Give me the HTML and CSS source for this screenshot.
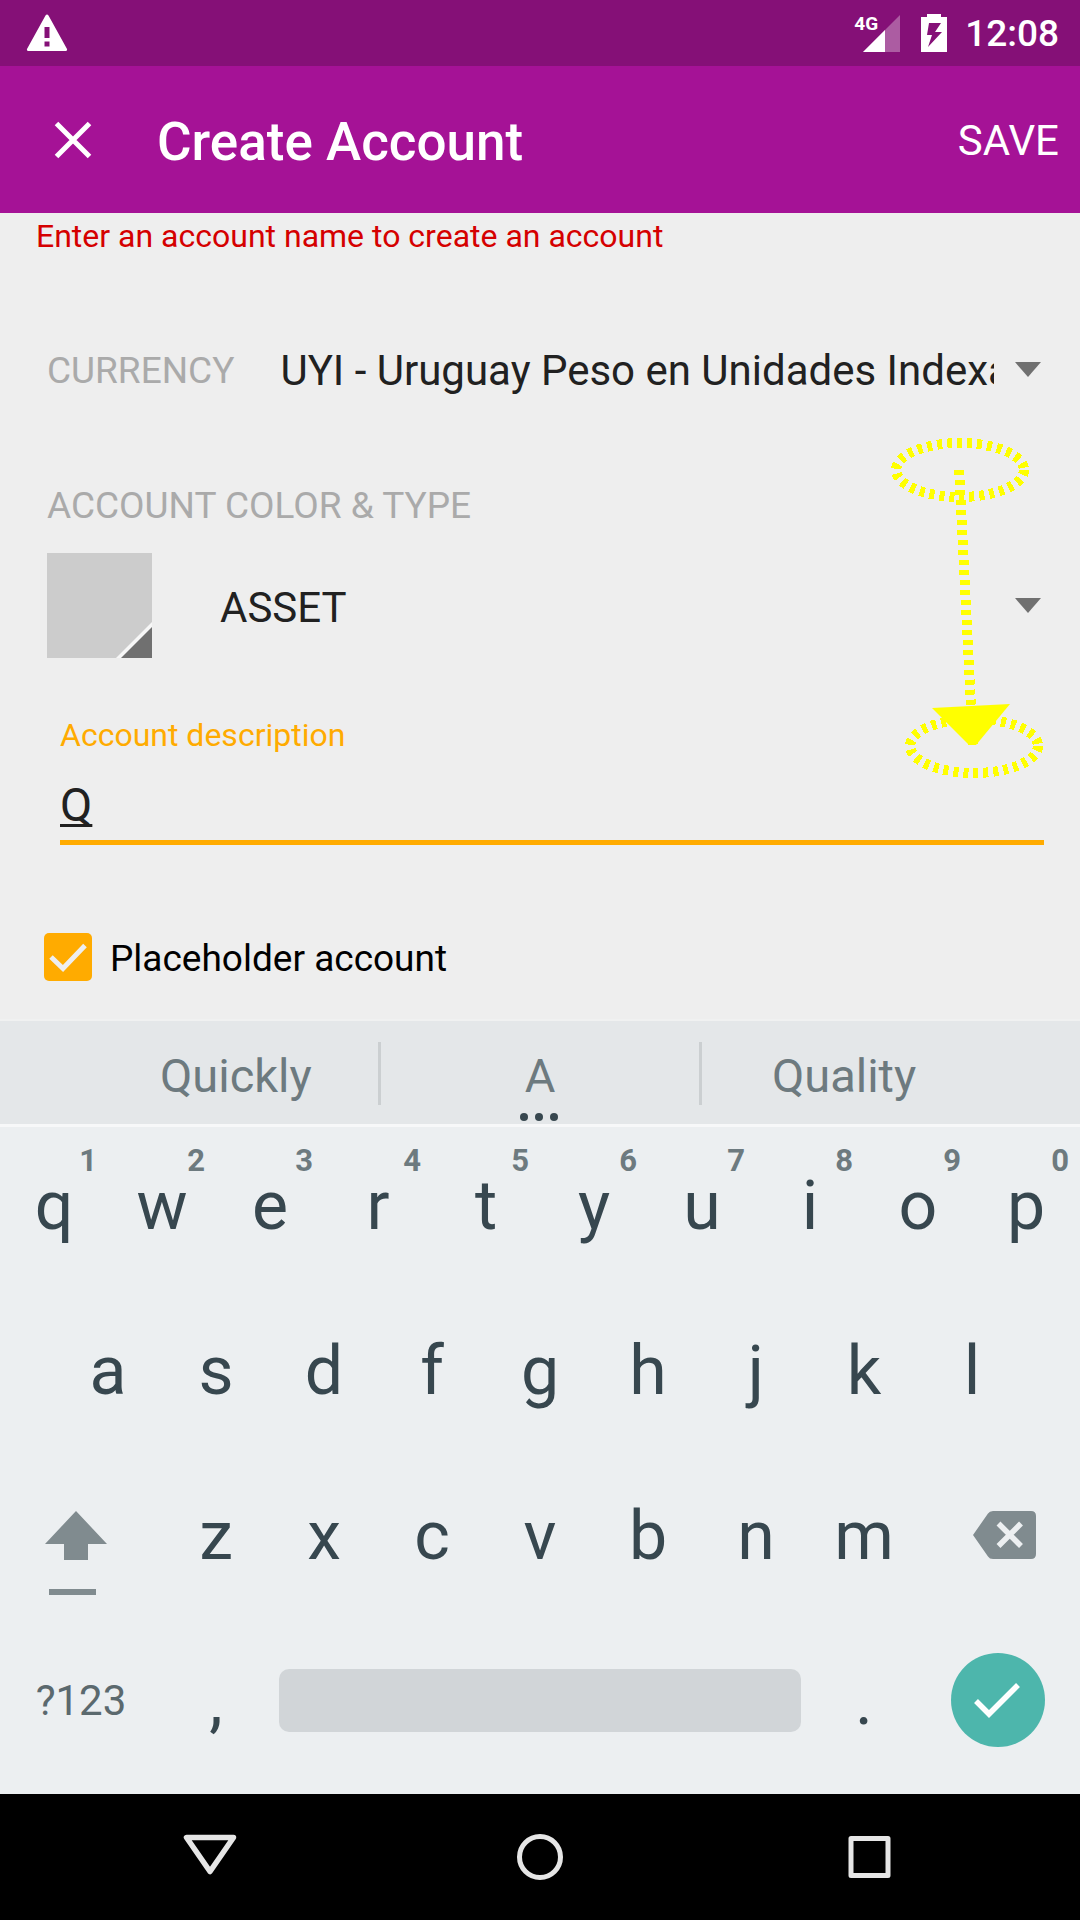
FILE: index.html
```html
<!DOCTYPE html>
<html lang="en">
<head>
<meta charset="utf-8">
<meta name="viewport" content="width=device-width, initial-scale=1">
<title>Create Account</title>
<link rel="stylesheet" href="styles.css">
</head>
<body>
<div class="status">
  <svg class="warn" width="42" height="38" viewBox="0 0 42 38" aria-hidden="true"><path fill="#fff" fill-rule="evenodd" d="M19.500 1.500Q21 -.5 22.500 1.500L41 35Q41.500 37 39.500 37H2.500Q.5 37 1 35ZM18.500 13v11h5V13ZM18.500 27.500v5h5v-5Z"/></svg>
  <span class="network">4G</span>
  <svg class="signal" width="37" height="37" viewBox="0 0 37 37" aria-hidden="true"><path fill="#fff" fill-opacity=".32" d="M37 0V37H0Z"/><path fill="#fff" d="M22 15V37H0Z"/></svg>
  <svg class="battery" width="26" height="38" viewBox="0 0 26 38" aria-hidden="true"><path fill="#fff" fill-rule="evenodd" d="M6 0h14v3h6v35H0V3h6ZM8 9 6 21h5L7 33 21 18h-7l6-9Z"/></svg>
  <span class="clock">12:08</span>
</div>
<header class="appbar">
  <button class="close" aria-label="Close"><svg width="38" height="38" viewBox="0 0 38 38"><path d="M2.500 2.500 35.500 35.500M35.500 2.500 2.500 35.500" stroke="#fff" stroke-width="5"/></svg></button>
  <h1 class="title">Create Account</h1>
  <button class="save">SAVE</button>
</header>
<main class="form">
  <p class="error">Enter an account name to create an account</p>
  <div class="row currency">
    <label class="caption" for="currency">CURRENCY</label>
    <select class="spinner" id="currency"><option>UYI - Uruguay Peso en Unidades Indexadas</option></select>
    <svg class="arrow" width="26" height="15" viewBox="0 0 26 15" aria-hidden="true"><path fill="#707070" d="M0 0H26L13 15Z"/></svg>
  </div>
  <label class="caption type-caption" for="type">ACCOUNT COLOR &amp; TYPE</label>
  <div class="row type">
    <button class="swatch" aria-label="Account color"><svg width="105" height="105" viewBox="0 0 105 105"><path fill="#ccc" d="M0 0H105V105H0Z"/><path fill="#f7f7f7" d="M105 69V105H69Z"/><path fill="#707070" d="M105 74V105H74Z"/></svg></button>
    <select class="spinner" id="type"><option>ASSET</option></select>
    <svg class="arrow" width="26" height="15" viewBox="0 0 26 15" aria-hidden="true"><path fill="#707070" d="M0 0H26L13 15Z"/></svg>
  </div>
  <div class="field">
    <label class="field-label" for="description">Account description</label>
    <input class="field-input" id="description" type="text" value="Q" autocomplete="off" spellcheck="false">
  </div>
  <label class="check">
    <input class="check-input" type="checkbox" checked>
    <span class="check-box"><svg width="48" height="48" viewBox="0 0 48 48" aria-hidden="true"><path d="M7 24 19 35.500 41 12.500" fill="none" stroke="#eee" stroke-width="5"/></svg></span>
    <span class="check-text">Placeholder account</span>
  </label>
  <svg class="gesture" width="156" height="344" viewBox="890 436 156 344" aria-hidden="true">
    <g fill="none" stroke="#ff0" stroke-width="10" stroke-dasharray="5 5" shape-rendering="crispEdges">
      <ellipse cx="960" cy="470" rx="64" ry="27"/>
      <ellipse cx="974" cy="746" rx="64" ry="27"/>
      <path d="M959 470 973 745"/>
    </g>
    <path fill="#ff0" d="M932 708 1010 704 976 745H969Z"/>
  </svg>
</main>
<section class="keyboard" aria-label="Keyboard">
  <div class="suggestions">
    <button class="suggestion">Quickly</button>
    <button class="suggestion middle">A<svg class="dots" width="40" height="8" viewBox="0 0 40 8" aria-hidden="true"><g fill="#37474f"><circle cx="5" cy="4" r="4"/><circle cx="20" cy="4" r="4"/><circle cx="35" cy="4" r="4"/></g></svg></button>
    <button class="suggestion">Quality</button>
  </div>
  <div class="keys">
    <div class="keyrow top">
      <button class="key">q<span class="hint">1</span></button><button class="key">w<span class="hint">2</span></button><button class="key">e<span class="hint">3</span></button><button class="key">r<span class="hint">4</span></button><button class="key">t<span class="hint">5</span></button><button class="key">y<span class="hint">6</span></button><button class="key">u<span class="hint">7</span></button><button class="key">i<span class="hint">8</span></button><button class="key">o<span class="hint">9</span></button><button class="key">p<span class="hint">0</span></button>
    </div>
    <div class="keyrow home">
      <button class="key">a</button><button class="key">s</button><button class="key">d</button><button class="key">f</button><button class="key">g</button><button class="key">h</button><button class="key">j</button><button class="key">k</button><button class="key">l</button>
    </div>
    <div class="keyrow lower">
      <button class="key shift" aria-label="Shift"><svg width="62" height="50" viewBox="0 0 62 50"><path fill="#808b8f" d="M31 0 62 33H43V49H19V33H0Z"/></svg><span class="shift-bar"></span></button>
      <button class="key">z</button><button class="key">x</button><button class="key">c</button><button class="key">v</button><button class="key">b</button><button class="key">n</button><button class="key">m</button>
      <button class="key delete" aria-label="Delete"><svg width="63" height="50" viewBox="0 0 63 50"><path fill="#808b8f" d="M0 24 15 2.500Q16.500 0 20 0H58Q63 0 63 5V43Q63 48 58 48H20Q16.500 48 15 45.500Z"/><path d="M25.500 12.500 48 35M48 12.500 25.500 35" stroke="#eceff1" stroke-width="5.500"/></svg></button>
    </div>
    <div class="keyrow bottom">
      <button class="key symbols">?123</button>
      <button class="key">,</button>
      <button class="key" aria-label="Space"><span class="space"></span></button>
      <button class="key">.</button>
      <button class="key" aria-label="Done"><svg width="96" height="96" viewBox="0 0 96 96"><circle cx="47" cy="47" r="47" fill="#4db6ac"/><path d="M25 48 38 61 67 32" fill="none" stroke="#fff" stroke-width="5.500"/></svg></button>
    </div>
  </div>
</section>
<nav class="navbar">
  <button class="nav" aria-label="Back"><svg width="56" height="48" viewBox="0 0 56 48"><path d="M3.500 4.500H50.500L27 38.500Z" fill="none" stroke="#e6e6e6" stroke-width="5.500" stroke-linejoin="round"/></svg></button>
  <button class="nav" aria-label="Home"><svg width="48" height="48" viewBox="0 0 48 48"><circle cx="24" cy="24" r="20.500" fill="none" stroke="#e6e6e6" stroke-width="5"/></svg></button>
  <button class="nav" aria-label="Overview"><svg width="48" height="48" viewBox="0 0 48 48"><rect x="6" y="5.500" width="37" height="37" fill="none" stroke="#e6e6e6" stroke-width="5" stroke-linejoin="round"/></svg></button>
</nav>
</body>
</html>
```
FILE: styles.css
```css
* { box-sizing: border-box; }

body {
  margin: 0;
  min-height: 100vh;
  display: flex;
  flex-direction: column;
  background: #eee;
  font-family: Roboto, "Noto Sans", sans-serif;
  color: #212121;
}

button, select, input {
  margin: 0;
  padding: 0;
  border: 0;
  background: none;
  color: inherit;
  font: inherit;
  outline: 0;
  appearance: none;
}

svg { display: block; flex: none; }

/* status bar */
.status {
  display: flex;
  align-items: center;
  height: 66px;
  padding: 0 21px 0 26px;
  background: #851077;
  color: #fff;
}
.warn { margin-right: auto; }
.network {
  align-self: flex-start;
  margin: 12px -15px 0 0;
  font-size: 19px;
  line-height: 24px;
  font-weight: 700;
}
.battery { margin: 0 18px 0 21px; }
.clock { padding-top: 2px; font-size: 37px; line-height: 44px; font-weight: 500; }

/* app bar */
.appbar {
  display: flex;
  align-items: center;
  height: 147px;
  padding: 0 21px 0 54px;
  background: #a51296;
  color: #fff;
}
.title {
  flex: 1;
  margin: 0 0 0 65px;
  padding-top: 4px;
  font-size: 53px;
  line-height: 60px;
  font-weight: 500;
}
.save { font-size: 42px; line-height: 48px; padding-top: 2px; }

/* form */
.form { position: relative; flex: 1; }
.error {
  margin: 0 0 68px;
  padding-left: 36px;
  font-size: 32px;
  line-height: 46px;
  color: #d50000;
}
.row { display: flex; align-items: center; padding: 0 39px 0 47px; }
.currency { height: 84px; }
.caption { font-size: 37px; line-height: 44px; color: #aaa; }
.currency .caption { padding-top: 3px; }
.spinner {
  flex: 1;
  min-width: 0;
  margin-right: 21px;
  padding-top: 4px;
  font-size: 42px;
  line-height: 52px;
  text-overflow: clip;
  overflow: hidden;
}
.currency .spinner { margin-left: 46px; }
.type-caption { display: block; margin: 73px 0 25px; padding-left: 47px; }
.type .spinner { margin-left: 68px; }
.field {
  display: flex;
  flex-direction: column;
  margin: 57px 36px 0 60px;
}
.field-label { font-size: 32px; line-height: 40px; color: #ffab00; }
.field-input {
  width: 100%;
  height: 90px;
  padding-top: 14px;
  border-bottom: 5px solid #ffab00;
  font-size: 47px;
  text-decoration: underline 3px;
  text-decoration-skip-ink: none;
  text-underline-offset: 3px;
}
.check {
  display: flex;
  align-items: center;
  margin: 88px 44px 38px;
  font-size: 37px;
  line-height: 44px;
  color: #000;
}
.check-input { position: absolute; opacity: 0; }
.check-box { margin-right: 18px; border-radius: 5px; background: #ffab00; }
.check-text { padding-top: 4px; }
.gesture { position: absolute; top: 223px; right: 34px; pointer-events: none; }

/* keyboard */
.keyboard { background: #eceff1; color: #37474f; }
.suggestions {
  display: grid;
  grid-template-columns: 7fr 8fr 7fr;
  align-items: center;
  height: 108px;
  padding: 2px 94px 0;
  background: #e4e7e9;
  border-top: 2px solid #f0f1f1;
  border-bottom: 3px solid #f7f8f9;
}
.suggestion {
  height: 63px;
  padding-top: 4px;
  font-size: 47px;
  line-height: 56px;
  color: #6d7a7f;
}
.middle {
  position: relative;
  border: solid #cbcfd1;
  border-width: 0 3px;
}
.dots { position: absolute; left: 50%; bottom: -16px; margin-left: -21px; }
.keys { padding-bottom: 7px; }
.keyrow { display: grid; height: 165px; }
.top { grid-template-columns: repeat(10, 1fr); }
.home { grid-template-columns: repeat(9, 1fr); padding: 0 5%; }
.lower { grid-template-columns: 3fr repeat(7, 2fr) 3fr; }
.bottom { grid-template-columns: 3fr 2fr 10fr 2fr 3fr; }
.key {
  position: relative;
  display: flex;
  align-items: center;
  justify-content: center;
  padding-bottom: 8px;
  font-size: 68px;
  line-height: 80px;
}
.hint {
  position: absolute;
  top: 16px;
  right: 11px;
  font-size: 31px;
  line-height: 36px;
  font-weight: 700;
  color: #6d7a7f;
}
.shift { padding-right: 11px; }
.shift-bar {
  position: absolute;
  left: 49px;
  bottom: 27px;
  width: 47px;
  height: 6px;
  background: #808b8f;
}
.delete { padding-left: 10px; }
.symbols { font-size: 42px; color: #5b696e; }
.space {
  flex: 1;
  height: 63px;
  margin: 0 9px;
  border-radius: 10px;
  background: #d1d5d8;
}

/* system navigation */
.navbar {
  display: grid;
  grid-template-columns: repeat(3, 1fr);
  height: 126px;
  padding: 0 46px;
  background: #000;
}
.nav { display: flex; align-items: center; justify-content: center; }
```
